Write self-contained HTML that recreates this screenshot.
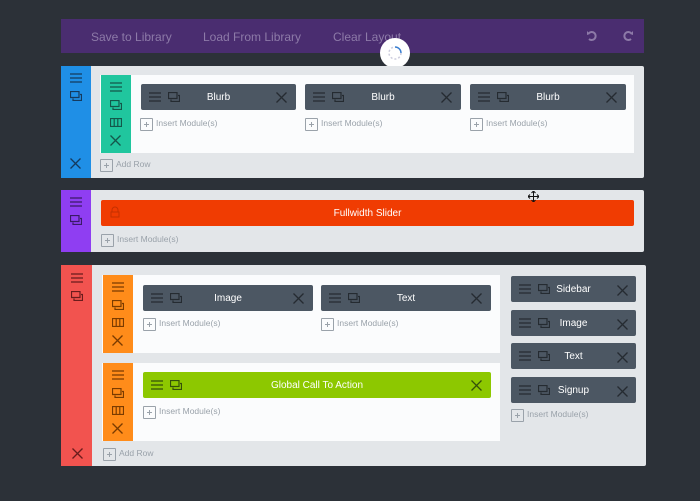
<!DOCTYPE html>
<html><head><meta charset="utf-8"><style>
*{margin:0;padding:0;box-sizing:border-box}
body{width:700px;height:501px;background:#2c3138;position:relative;overflow:hidden;font-family:"Liberation Sans",sans-serif}
.a{position:absolute}
.tb{left:61px;top:19px;width:583px;height:34px;background:#4a2d70}
.tb span{position:absolute;top:11px;color:#8d7aa8;font-size:12px}
.sec{background:#e3e6e9;border-radius:2px}
.w{background:#fbfcfd}
.mod{background:#4c5763;border-radius:2px;color:#fff;font-size:10px;height:26px}
.mod .t{position:absolute;left:0;right:0;top:8px;text-align:center}
.ins{font-size:8.5px;color:#9aa2aa;height:11px;line-height:11px;padding-left:16px}
.ins:before{content:"";position:absolute;left:0;top:0;width:11px;height:11px;border:1px solid #9aa2aa;border-radius:1px;background:linear-gradient(#9aa2aa,#9aa2aa) center/5px 1px no-repeat,linear-gradient(#9aa2aa,#9aa2aa) center/1px 5px no-repeat}
svg{position:absolute}
</style></head><body>
<svg width="0" height="0"><defs>
<g id="h"><path d="M0 1H12M0 5H12M0 9H12" stroke="currentColor" stroke-width="1.3" fill="none"/></g>
<g id="d"><path d="M0.5 0.5H9V6.5H0.5Z M3 7.5V9.5H11.5V3.5H10" stroke="currentColor" stroke-width="1.2" fill="none"/></g>
<g id="c"><path d="M0.5 0.5H11.5V8.5H0.5Z M4.2 0.5V8.5 M7.8 0.5V8.5" stroke="currentColor" stroke-width="1.2" fill="none"/></g>
<g id="x"><path d="M0.5 0.5L10.5 10.5M10.5 0.5L0.5 10.5" stroke="currentColor" stroke-width="1.3" fill="none"/></g>
</defs></svg>

<div class="a tb"><span style="left:30px">Save to Library</span><span style="left:142px">Load From Library</span><span style="left:272px">Clear Layout</span>
<svg style="left:525px;top:11px" width="12" height="12" viewBox="0 0 12 12"><path d="M3 3A4 4 0 1 1 3 9" stroke="#8d7aa8" stroke-width="2" fill="none"/><path d="M1 1L4 4L1 5Z" fill="#8d7aa8"/></svg>
<svg style="left:561px;top:11px" width="12" height="12" viewBox="0 0 12 12"><path d="M9 3A4 4 0 1 0 9 9" stroke="#8d7aa8" stroke-width="2" fill="none"/><path d="M11 1L8 4L11 5Z" fill="#8d7aa8"/></svg>
</div>
<div class="a" style="left:380px;top:38px;width:30px;height:30px;border-radius:50%;background:#fff"></div>
<svg style="left:388px;top:46px" width="14" height="14" viewBox="0 0 14 14"><path d="M7 1A6 6 0 0 1 13 7" stroke="#3b7fd0" stroke-width="1.5" fill="none"/><path d="M13 7A6 6 0 1 1 7 1" stroke="#ccd" stroke-width="1.5" fill="none" stroke-dasharray="2 2"/></svg>

<!-- Section 1 -->
<div class="a sec" style="left:61px;top:66px;width:583px;height:112px"></div>
<div class="a" style="left:61px;top:66px;width:30px;height:112px;background:#1f8fe6"></div>
<svg style="left:70px;top:73px;color:#153a5e" width="12" height="10"><use href="#h"/></svg>
<svg style="left:70px;top:91px;color:#153a5e" width="12" height="10"><use href="#d"/></svg>
<svg style="left:70px;top:158px;color:#153a5e" width="11" height="11"><use href="#x"/></svg>
<div class="a w" style="left:100px;top:75px;width:534px;height:78px"></div>
<div class="a" style="left:101px;top:75px;width:30px;height:78px;background:#20c69e"></div>
<svg style="left:110px;top:82px;color:#14574a" width="12" height="10"><use href="#h"/></svg>
<svg style="left:110px;top:100px;color:#14574a" width="12" height="10"><use href="#d"/></svg>
<svg style="left:110px;top:118px;color:#14574a" width="12" height="9"><use href="#c"/></svg>
<svg style="left:110px;top:135px;color:#14574a" width="11" height="11"><use href="#x"/></svg>

<div class="a mod" style="left:141px;top:84px;width:155px"><div class="t">Blurb</div>
<svg style="left:8px;top:8px;color:#252b31" width="12" height="10"><use href="#h"/></svg><svg style="left:27px;top:8px;color:#252b31" width="12" height="10"><use href="#d"/></svg><svg style="left:135px;top:8px;color:#252b31" width="11" height="11"><use href="#x"/></svg></div>
<div class="a mod" style="left:305px;top:84px;width:156px"><div class="t">Blurb</div>
<svg style="left:8px;top:8px;color:#252b31" width="12" height="10"><use href="#h"/></svg><svg style="left:27px;top:8px;color:#252b31" width="12" height="10"><use href="#d"/></svg><svg style="left:136px;top:8px;color:#252b31" width="11" height="11"><use href="#x"/></svg></div>
<div class="a mod" style="left:470px;top:84px;width:156px"><div class="t">Blurb</div>
<svg style="left:8px;top:8px;color:#252b31" width="12" height="10"><use href="#h"/></svg><svg style="left:27px;top:8px;color:#252b31" width="12" height="10"><use href="#d"/></svg><svg style="left:136px;top:8px;color:#252b31" width="11" height="11"><use href="#x"/></svg></div>
<div class="a ins" style="left:140px;top:118px">Insert Module(s)</div>
<div class="a ins" style="left:305px;top:118px">Insert Module(s)</div>
<div class="a ins" style="left:470px;top:118px">Insert Module(s)</div>
<div class="a ins" style="left:100px;top:159px">Add Row</div>

<!-- Section 2 -->
<div class="a sec" style="left:61px;top:190px;width:583px;height:62px"></div>
<div class="a" style="left:61px;top:190px;width:30px;height:62px;background:#8f3ef2"></div>
<svg style="left:70px;top:197px;color:#3a1a66" width="12" height="10"><use href="#h"/></svg>
<svg style="left:70px;top:215px;color:#3a1a66" width="12" height="10"><use href="#d"/></svg>
<div class="a" style="left:101px;top:200px;width:533px;height:26px;background:#f03c02;border-radius:2px;color:#fff;font-size:10px;text-align:center;line-height:27px">Fullwidth Slider</div>
<svg style="left:110px;top:206px" width="10" height="12" viewBox="0 0 10 12"><path d="M2 6V4A3 3 0 0 1 8 4V6M1 6H9V11H1Z" stroke="#c43000" fill="none"/></svg>
<div class="a ins" style="left:101px;top:234px">Insert Module(s)</div>
<svg style="left:528px;top:191px" width="11" height="11" viewBox="0 0 11 11"><path d="M5.5 0V11M0 5.5H11M3.5 2L5.5 0L7.5 2M3.5 9L5.5 11L7.5 9M2 3.5L0 5.5L2 7.5M9 3.5L11 5.5L9 7.5" stroke="#111" fill="none"/></svg>

<!-- Section 3 -->
<div class="a sec" style="left:61px;top:265px;width:585px;height:201px"></div>
<div class="a" style="left:61px;top:265px;width:31px;height:201px;background:#f2534f"></div>
<svg style="left:71px;top:273px;color:#6a1c1c" width="12" height="10"><use href="#h"/></svg>
<svg style="left:71px;top:291px;color:#6a1c1c" width="12" height="10"><use href="#d"/></svg>
<svg style="left:72px;top:448px;color:#6a1c1c" width="11" height="11"><use href="#x"/></svg>

<div class="a w" style="left:102px;top:275px;width:398px;height:78px"></div>
<div class="a" style="left:103px;top:275px;width:30px;height:78px;background:#ff8c1a"></div>
<svg style="left:112px;top:282px;color:#7a3b00" width="12" height="10"><use href="#h"/></svg>
<svg style="left:112px;top:300px;color:#7a3b00" width="12" height="10"><use href="#d"/></svg>
<svg style="left:112px;top:318px;color:#7a3b00" width="12" height="9"><use href="#c"/></svg>
<svg style="left:112px;top:335px;color:#7a3b00" width="11" height="11"><use href="#x"/></svg>
<div class="a mod" style="left:143px;top:285px;width:170px"><div class="t">Image</div>
<svg style="left:8px;top:8px;color:#252b31" width="12" height="10"><use href="#h"/></svg><svg style="left:27px;top:8px;color:#252b31" width="12" height="10"><use href="#d"/></svg><svg style="left:150px;top:8px;color:#252b31" width="11" height="11"><use href="#x"/></svg></div>
<div class="a mod" style="left:321px;top:285px;width:170px"><div class="t">Text</div>
<svg style="left:8px;top:8px;color:#252b31" width="12" height="10"><use href="#h"/></svg><svg style="left:27px;top:8px;color:#252b31" width="12" height="10"><use href="#d"/></svg><svg style="left:150px;top:8px;color:#252b31" width="11" height="11"><use href="#x"/></svg></div>
<div class="a ins" style="left:143px;top:318px">Insert Module(s)</div>
<div class="a ins" style="left:321px;top:318px">Insert Module(s)</div>

<div class="a w" style="left:102px;top:363px;width:398px;height:78px"></div>
<div class="a" style="left:103px;top:363px;width:30px;height:78px;background:#ff8c1a"></div>
<svg style="left:112px;top:370px;color:#7a3b00" width="12" height="10"><use href="#h"/></svg>
<svg style="left:112px;top:388px;color:#7a3b00" width="12" height="10"><use href="#d"/></svg>
<svg style="left:112px;top:406px;color:#7a3b00" width="12" height="9"><use href="#c"/></svg>
<svg style="left:112px;top:423px;color:#7a3b00" width="11" height="11"><use href="#x"/></svg>
<div class="a mod" style="left:143px;top:372px;width:348px;background:#8dc800"><div class="t">Global Call To Action</div>
<svg style="left:8px;top:8px;color:#34500a" width="12" height="10"><use href="#h"/></svg><svg style="left:27px;top:8px;color:#34500a" width="12" height="10"><use href="#d"/></svg><svg style="left:328px;top:8px;color:#34500a" width="11" height="11"><use href="#x"/></svg></div>
<div class="a ins" style="left:143px;top:406px">Insert Module(s)</div>
<div class="a ins" style="left:103px;top:448px">Add Row</div>

<div class="a mod" style="left:511px;top:276px;width:125px"><div class="t">Sidebar</div>
<svg style="left:8px;top:8px;color:#252b31" width="12" height="10"><use href="#h"/></svg><svg style="left:27px;top:8px;color:#252b31" width="12" height="10"><use href="#d"/></svg><svg style="left:106px;top:9px;color:#252b31" width="11" height="11"><use href="#x"/></svg></div>
<div class="a mod" style="left:511px;top:310px;width:125px"><div class="t">Image</div>
<svg style="left:8px;top:8px;color:#252b31" width="12" height="10"><use href="#h"/></svg><svg style="left:27px;top:8px;color:#252b31" width="12" height="10"><use href="#d"/></svg><svg style="left:106px;top:9px;color:#252b31" width="11" height="11"><use href="#x"/></svg></div>
<div class="a mod" style="left:511px;top:343px;width:125px"><div class="t">Text</div>
<svg style="left:8px;top:8px;color:#252b31" width="12" height="10"><use href="#h"/></svg><svg style="left:27px;top:8px;color:#252b31" width="12" height="10"><use href="#d"/></svg><svg style="left:106px;top:9px;color:#252b31" width="11" height="11"><use href="#x"/></svg></div>
<div class="a mod" style="left:511px;top:377px;width:125px"><div class="t">Signup</div>
<svg style="left:8px;top:8px;color:#252b31" width="12" height="10"><use href="#h"/></svg><svg style="left:27px;top:8px;color:#252b31" width="12" height="10"><use href="#d"/></svg><svg style="left:106px;top:9px;color:#252b31" width="11" height="11"><use href="#x"/></svg></div>
<div class="a ins" style="left:511px;top:409px">Insert Module(s)</div>
</body></html>
